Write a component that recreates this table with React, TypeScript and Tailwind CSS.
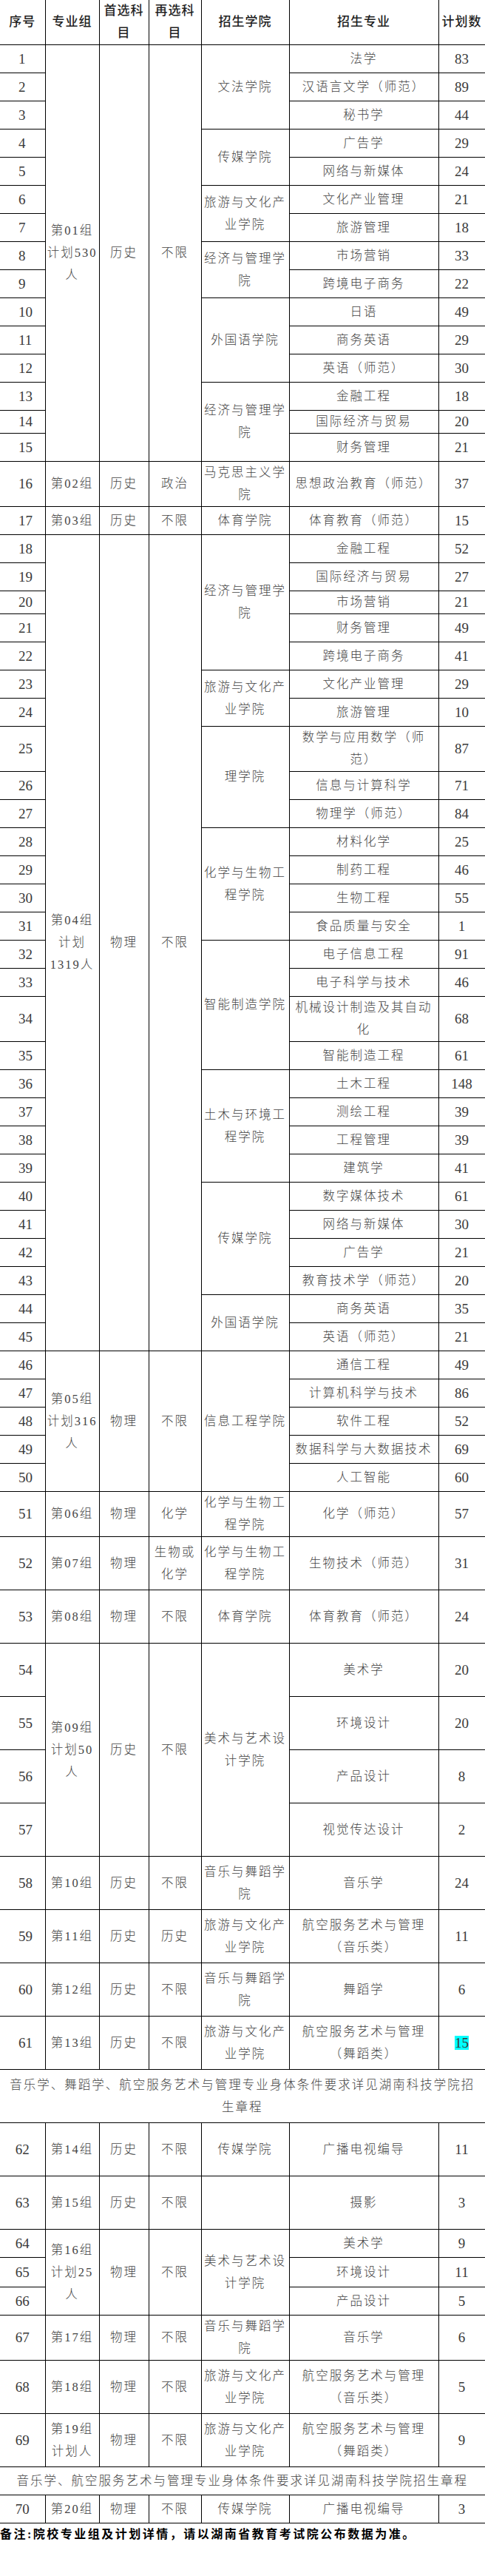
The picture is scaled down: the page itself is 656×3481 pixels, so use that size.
import React from 'react';

type Cell = { t: string[]; rs?: number };
type DataRow = {
  kind: 'd';
  n: number;
  h: string;
  g?: Cell;
  f?: Cell;
  s?: Cell;
  c?: Cell;
  m: string[];
  p: string;
  hl?: boolean;
};
type NoteRow = { kind: 'n'; h: string; t: string[] };
type Row = DataRow | NoteRow;

const A = 'h-[38px]';
const B = 'h-[31px]';
const C = 'h-[61px]';
const D = 'h-[72px]';
const E = 'h-[40px]';

const one = (s: string, rs?: number): Cell => ({ t: [s], rs });
const two = (a: string, b: string, rs?: number): Cell => ({ t: [a, b], rs });

const rows: Row[] = [
  { kind: 'd', n: 1, h: A, g: { t: ['第01组', '计划530', '人'], rs: 15 }, f: one('历史', 15), s: one('不限', 15), c: one('文法学院', 3), m: ['法学'], p: '83' },
  { kind: 'd', n: 2, h: A, m: ['汉语言文学（师范）'], p: '89' },
  { kind: 'd', n: 3, h: A, m: ['秘书学'], p: '44' },
  { kind: 'd', n: 4, h: A, c: one('传媒学院', 2), m: ['广告学'], p: '29' },
  { kind: 'd', n: 5, h: A, m: ['网络与新媒体'], p: '24' },
  { kind: 'd', n: 6, h: A, c: two('旅游与文化产', '业学院', 2), m: ['文化产业管理'], p: '21' },
  { kind: 'd', n: 7, h: A, m: ['旅游管理'], p: '18' },
  { kind: 'd', n: 8, h: A, c: two('经济与管理学', '院', 2), m: ['市场营销'], p: '33' },
  { kind: 'd', n: 9, h: A, m: ['跨境电子商务'], p: '22' },
  { kind: 'd', n: 10, h: A, c: one('外国语学院', 3), m: ['日语'], p: '49' },
  { kind: 'd', n: 11, h: A, m: ['商务英语'], p: '29' },
  { kind: 'd', n: 12, h: A, m: ['英语（师范）'], p: '30' },
  { kind: 'd', n: 13, h: A, c: two('经济与管理学', '院', 3), m: ['金融工程'], p: '18' },
  { kind: 'd', n: 14, h: B, m: ['国际经济与贸易'], p: '20' },
  { kind: 'd', n: 15, h: A, m: ['财务管理'], p: '21' },
  { kind: 'd', n: 16, h: C, g: one('第02组'), f: one('历史'), s: one('政治'), c: two('马克思主义学', '院'), m: ['思想政治教育（师范）'], p: '37' },
  { kind: 'd', n: 17, h: A, g: one('第03组'), f: one('历史'), s: one('不限'), c: one('体育学院'), m: ['体育教育（师范）'], p: '15' },
  { kind: 'd', n: 18, h: A, g: { t: ['第04组', '计划', '1319人'], rs: 28 }, f: one('物理', 28), s: one('不限', 28), c: two('经济与管理学', '院', 5), m: ['金融工程'], p: '52' },
  { kind: 'd', n: 19, h: A, m: ['国际经济与贸易'], p: '27' },
  { kind: 'd', n: 20, h: B, m: ['市场营销'], p: '21' },
  { kind: 'd', n: 21, h: A, m: ['财务管理'], p: '49' },
  { kind: 'd', n: 22, h: A, m: ['跨境电子商务'], p: '41' },
  { kind: 'd', n: 23, h: A, c: two('旅游与文化产', '业学院', 2), m: ['文化产业管理'], p: '29' },
  { kind: 'd', n: 24, h: A, m: ['旅游管理'], p: '10' },
  { kind: 'd', n: 25, h: C, c: one('理学院', 3), m: ['数学与应用数学（师', '范）'], p: '87' },
  { kind: 'd', n: 26, h: A, m: ['信息与计算科学'], p: '71' },
  { kind: 'd', n: 27, h: A, m: ['物理学（师范）'], p: '84' },
  { kind: 'd', n: 28, h: A, c: two('化学与生物工', '程学院', 4), m: ['材料化学'], p: '25' },
  { kind: 'd', n: 29, h: A, m: ['制药工程'], p: '46' },
  { kind: 'd', n: 30, h: A, m: ['生物工程'], p: '55' },
  { kind: 'd', n: 31, h: A, m: ['食品质量与安全'], p: '1' },
  { kind: 'd', n: 32, h: A, c: one('智能制造学院', 4), m: ['电子信息工程'], p: '91' },
  { kind: 'd', n: 33, h: A, m: ['电子科学与技术'], p: '46' },
  { kind: 'd', n: 34, h: C, m: ['机械设计制造及其自动', '化'], p: '68' },
  { kind: 'd', n: 35, h: A, m: ['智能制造工程'], p: '61' },
  { kind: 'd', n: 36, h: A, c: two('土木与环境工', '程学院', 4), m: ['土木工程'], p: '148' },
  { kind: 'd', n: 37, h: A, m: ['测绘工程'], p: '39' },
  { kind: 'd', n: 38, h: A, m: ['工程管理'], p: '39' },
  { kind: 'd', n: 39, h: A, m: ['建筑学'], p: '41' },
  { kind: 'd', n: 40, h: A, c: one('传媒学院', 4), m: ['数字媒体技术'], p: '61' },
  { kind: 'd', n: 41, h: A, m: ['网络与新媒体'], p: '30' },
  { kind: 'd', n: 42, h: A, m: ['广告学'], p: '21' },
  { kind: 'd', n: 43, h: A, m: ['教育技术学（师范）'], p: '20' },
  { kind: 'd', n: 44, h: A, c: one('外国语学院', 2), m: ['商务英语'], p: '35' },
  { kind: 'd', n: 45, h: A, m: ['英语（师范）'], p: '21' },
  { kind: 'd', n: 46, h: A, g: { t: ['第05组', '计划316', '人'], rs: 5 }, f: one('物理', 5), s: one('不限', 5), c: one('信息工程学院', 5), m: ['通信工程'], p: '49' },
  { kind: 'd', n: 47, h: A, m: ['计算机科学与技术'], p: '86' },
  { kind: 'd', n: 48, h: A, m: ['软件工程'], p: '52' },
  { kind: 'd', n: 49, h: A, m: ['数据科学与大数据技术'], p: '69' },
  { kind: 'd', n: 50, h: A, m: ['人工智能'], p: '60' },
  { kind: 'd', n: 51, h: C, g: one('第06组'), f: one('物理'), s: one('化学'), c: two('化学与生物工', '程学院'), m: ['化学（师范）'], p: '57' },
  { kind: 'd', n: 52, h: D, g: one('第07组'), f: one('物理'), s: two('生物或', '化学'), c: two('化学与生物工', '程学院'), m: ['生物技术（师范）'], p: '31' },
  { kind: 'd', n: 53, h: D, g: one('第08组'), f: one('物理'), s: one('不限'), c: one('体育学院'), m: ['体育教育（师范）'], p: '24' },
  { kind: 'd', n: 54, h: D, g: { t: ['第09组', '计划50', '人'], rs: 4 }, f: one('历史', 4), s: one('不限', 4), c: two('美术与艺术设', '计学院', 4), m: ['美术学'], p: '20' },
  { kind: 'd', n: 55, h: D, m: ['环境设计'], p: '20' },
  { kind: 'd', n: 56, h: D, m: ['产品设计'], p: '8' },
  { kind: 'd', n: 57, h: D, m: ['视觉传达设计'], p: '2' },
  { kind: 'd', n: 58, h: D, g: one('第10组'), f: one('历史'), s: one('不限'), c: two('音乐与舞蹈学', '院'), m: ['音乐学'], p: '24' },
  { kind: 'd', n: 59, h: D, g: one('第11组'), f: one('历史'), s: one('历史'), c: two('旅游与文化产', '业学院'), m: ['航空服务艺术与管理', '（音乐类）'], p: '11' },
  { kind: 'd', n: 60, h: D, g: one('第12组'), f: one('历史'), s: one('不限'), c: two('音乐与舞蹈学', '院'), m: ['舞蹈学'], p: '6' },
  { kind: 'd', n: 61, h: D, g: one('第13组'), f: one('历史'), s: one('不限'), c: two('旅游与文化产', '业学院'), m: ['航空服务艺术与管理', '（舞蹈类）'], p: '15', hl: true },
  { kind: 'n', h: D, t: ['音乐学、舞蹈学、航空服务艺术与管理专业身体条件要求详见湖南科技学院招', '生章程'] },
  { kind: 'd', n: 62, h: D, g: one('第14组'), f: one('历史'), s: one('不限'), c: one('传媒学院'), m: ['广播电视编导'], p: '11' },
  { kind: 'd', n: 63, h: D, g: one('第15组'), f: one('历史'), s: one('不限'), c: one(''), m: ['摄影'], p: '3' },
  { kind: 'd', n: 64, h: A, g: { t: ['第16组', '计划25', '人'], rs: 3 }, f: one('物理', 3), s: one('不限', 3), c: two('美术与艺术设', '计学院', 3), m: ['美术学'], p: '9' },
  { kind: 'd', n: 65, h: E, m: ['环境设计'], p: '11' },
  { kind: 'd', n: 66, h: A, m: ['产品设计'], p: '5' },
  { kind: 'd', n: 67, h: C, g: one('第17组'), f: one('物理'), s: one('不限'), c: two('音乐与舞蹈学', '院'), m: ['音乐学'], p: '6' },
  { kind: 'd', n: 68, h: D, g: one('第18组'), f: one('物理'), s: one('不限'), c: two('旅游与文化产', '业学院'), m: ['航空服务艺术与管理', '（音乐类）'], p: '5' },
  { kind: 'd', n: 69, h: D, g: two('第19组', '计划人'), f: one('物理'), s: one('不限'), c: two('旅游与文化产', '业学院'), m: ['航空服务艺术与管理', '（舞蹈类）'], p: '9' },
  { kind: 'n', h: A, t: ['音乐学、航空服务艺术与管理专业身体条件要求详见湖南科技学院招生章程'] },
  { kind: 'd', n: 70, h: A, g: one('第20组'), f: one('物理'), s: one('不限'), c: one('传媒学院'), m: ['广播电视编导'], p: '3' },
];

function Lines({ t }: { t: string[] }) {
  return (
    <>
      {t.map((line, i) => (
        <React.Fragment key={i}>
          {i > 0 && <br />}
          {line}
        </React.Fragment>
      ))}
    </>
  );
}

const td = 'border border-black align-middle text-center whitespace-nowrap p-0 leading-[30px]';
const num = "font-['Liberation_Serif',serif] text-[19px] tracking-normal text-[#3a3a3a]";
const th =
  "border border-t-0 border-black align-middle text-center whitespace-nowrap p-0 leading-[30px] text-[17px] tracking-[1px] font-medium text-[#1f1f1f]";

function SpanCell({ cell }: { cell?: Cell }) {
  if (!cell) return null;
  return (
    <td rowSpan={cell.rs ?? 1} className={td}>
      <Lines t={cell.t} />
    </td>
  );
}

export default function App() {
  return (
    <div className="w-[656px] min-h-[3481px] bg-white font-['Liberation_Serif','Noto_Sans_CJK_SC',serif]">
      <table className="w-[656px] table-fixed border-collapse text-[16.5px] tracking-[2px] font-light text-[#454545]">
        <colgroup>
          <col className="w-[61px]" />
          <col className="w-[73px]" />
          <col className="w-[67px]" />
          <col className="w-[71px]" />
          <col className="w-[119px]" />
          <col className="w-[202px]" />
          <col className="w-[63px]" />
        </colgroup>
        <thead>
          <tr className="h-[58px]">
            <th className={th + ' border-l-0'}>序号</th>
            <th className={th}>专业组</th>
            <th className={th}>
              首选科
              <br />目
            </th>
            <th className={th}>
              再选科
              <br />目
            </th>
            <th className={th}>招生学院</th>
            <th className={th}>招生专业</th>
            <th className={th}>计划数</th>
          </tr>
        </thead>
        <tbody>
          {rows.map((r, i) => {
            if (r.kind === 'n') {
              return (
                <tr key={'n' + i} className={r.h}>
                  <td colSpan={7} className={td + ' border-l-0'}>
                    <Lines t={r.t} />
                  </td>
                </tr>
              );
            }
            const left = r.n <= 61;
            return (
              <tr key={r.n} className={r.h}>
                <td className={td + ' border-l-0 ' + num + (left ? ' !text-left !pl-[25px]' : '')}>{r.n}</td>
                <SpanCell cell={r.g} />
                <SpanCell cell={r.f} />
                <SpanCell cell={r.s} />
                <SpanCell cell={r.c} />
                <td className={td}>
                  <Lines t={r.m} />
                </td>
                <td className={td + ' ' + num}>
                  {r.hl ? <span className="inline-block bg-[#00ffff] leading-[19px]">{r.p}</span> : r.p}
                </td>
              </tr>
            );
          })}
        </tbody>
      </table>
      <div className="text-[16px] tracking-[2.5px] leading-[30px] font-bold text-black whitespace-nowrap">
        备注:院校专业组及计划详情，请以湖南省教育考试院公布数据为准。
      </div>
    </div>
  );
}
